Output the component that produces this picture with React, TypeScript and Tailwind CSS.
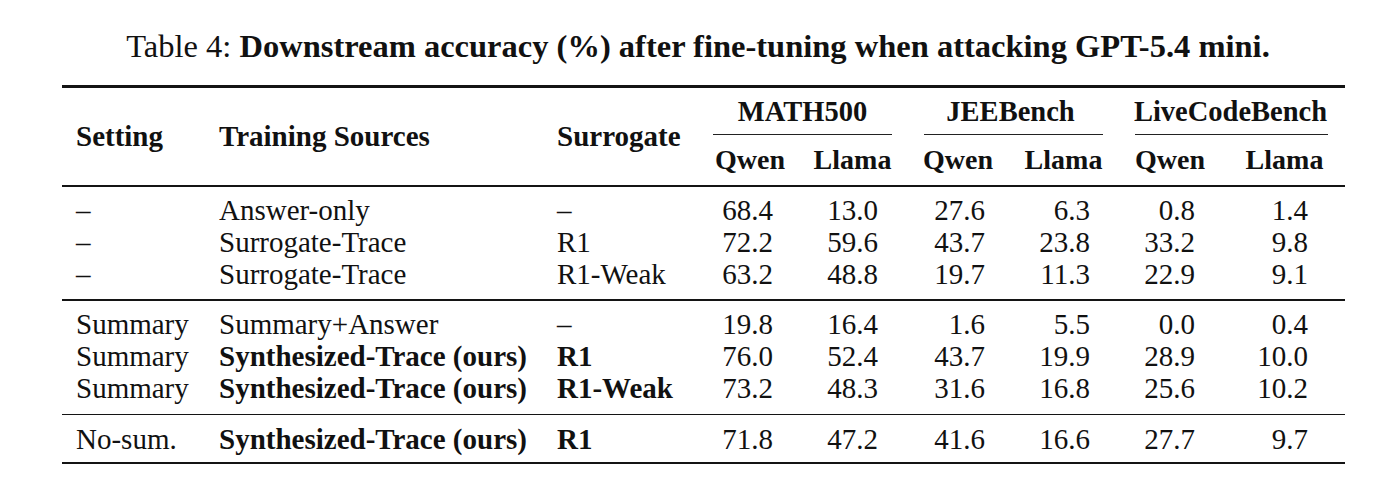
import React from "react";

type Row = {
  setting: string;
  source: string;
  surrogate: string;
  bold: boolean;
  vals: string[];
};

const blocks: { rows: Row[]; pt: string; pb: string }[] = [
  {
    pt: "pt-[7px]",
    pb: "pb-[9.5px]",
    rows: [
      { setting: "–", source: "Answer-only", surrogate: "–", bold: false, vals: ["68.4", "13.0", "27.6", "6.3", "0.8", "1.4"] },
      { setting: "–", source: "Surrogate-Trace", surrogate: "R1", bold: false, vals: ["72.2", "59.6", "43.7", "23.8", "33.2", "9.8"] },
      { setting: "–", source: "Surrogate-Trace", surrogate: "R1-Weak", bold: false, vals: ["63.2", "48.8", "19.7", "11.3", "22.9", "9.1"] },
    ],
  },
  {
    pt: "pt-[7px]",
    pb: "pb-[10px]",
    rows: [
      { setting: "Summary", source: "Summary+Answer", surrogate: "–", bold: false, vals: ["19.8", "16.4", "1.6", "5.5", "0.0", "0.4"] },
      { setting: "Summary", source: "Synthesized-Trace (ours)", surrogate: "R1", bold: true, vals: ["76.0", "52.4", "43.7", "19.9", "28.9", "10.0"] },
      { setting: "Summary", source: "Synthesized-Trace (ours)", surrogate: "R1-Weak", bold: true, vals: ["73.2", "48.3", "31.6", "16.8", "25.6", "10.2"] },
    ],
  },
  {
    pt: "pt-[7.5px]",
    pb: "pb-[7px]",
    rows: [
      { setting: "No-sum.", source: "Synthesized-Trace (ours)", surrogate: "R1", bold: true, vals: ["71.8", "47.2", "41.6", "16.6", "27.7", "9.7"] },
    ],
  },
];

const numPad = ["pr-[27px]", "pr-[27px]", "pr-[26px]", "pr-[26px]", "pr-[29px]", "pr-[37px]"];

const GRID =
  "grid grid-cols-[143px_338px_157px_100px_105px_106px_105px_108px_121px]";

function Rule({ h }: { h: string }) {
  return <div className={`${h} w-full bg-[#141414]`} />;
}

export default function App() {
  return (
    <div
      className="w-[1400px] h-[497px] bg-white text-[#111] overflow-hidden"
      style={{ fontFamily: '"Liberation Serif", "Times New Roman", serif' }}
    >
      <div className="pt-[28px] text-center text-[32.5px] leading-[36px] pr-[4px] whitespace-nowrap">
        <span>Table 4: </span>
        <span className="font-bold">
          Downstream accuracy (%) after fine-tuning when attacking GPT-5.4 mini.
        </span>
      </div>

      <div className="ml-[62px] w-[1283px] mt-[21px]">
        <Rule h="h-[3px]" />

        {/* header */}
        <div
          className={`${GRID} grid-rows-[32px_16px_32px] pt-[8px] pb-[9px] text-[29px] leading-[32px] font-bold`}
        >
          <div className="row-span-3 self-center pl-[14px]">Setting</div>
          <div className="row-span-3 self-center pl-[14px]">Training Sources</div>
          <div className="row-span-3 self-center pl-[14px]">Surrogate</div>

          <div className="col-span-2 text-center text-[28.5px]">MATH500</div>
          <div className="col-span-2 text-center text-[28.5px]">JEEBench</div>
          <div className="col-span-2 text-center text-[28.5px]">LiveCodeBench</div>

          <div className="col-span-2 ml-[13px] mr-[13px] mt-[6px] h-[1px] bg-[#222]" />
          <div className="col-span-2 ml-[19px] mr-[13px] mt-[6px] h-[1px] bg-[#222]" />
          <div className="col-span-2 ml-[19px] mr-[17px] mt-[6px] h-[1px] bg-[#222]" />

          <div className="text-center text-[28px]">Qwen</div>
          <div className="text-center text-[28px]">Llama</div>
          <div className="text-center text-[28px]">Qwen</div>
          <div className="text-center text-[28px]">Llama</div>
          <div className="text-center text-[28px]">Qwen</div>
          <div className="text-center text-[28px]">Llama</div>
        </div>

        <Rule h="h-[1.5px]" />

        {blocks.map((b, bi) => (
          <React.Fragment key={bi}>
            <div className={`${b.pt} ${b.pb}`}>
              {b.rows.map((r, ri) => (
                <div key={ri} className={`${GRID} text-[29px] leading-[32px]`}>
                  <div className="pl-[14px] whitespace-nowrap">{r.setting}</div>
                  <div className={`pl-[14px] whitespace-nowrap ${r.bold ? "font-bold" : ""}`}>
                    {r.source}
                  </div>
                  <div
                    className={`pl-[14px] whitespace-nowrap ${
                      r.bold && r.surrogate !== "–" ? "font-bold" : ""
                    }`}
                  >
                    {r.surrogate}
                  </div>
                  {r.vals.map((v, vi) => (
                    <div key={vi} className={`text-right ${numPad[vi]}`}>
                      {v}
                    </div>
                  ))}
                </div>
              ))}
            </div>
            {bi < blocks.length - 1 ? <Rule h="h-[1.5px]" /> : <Rule h="h-[2.5px]" />}
          </React.Fragment>
        ))}
      </div>
    </div>
  );
}
